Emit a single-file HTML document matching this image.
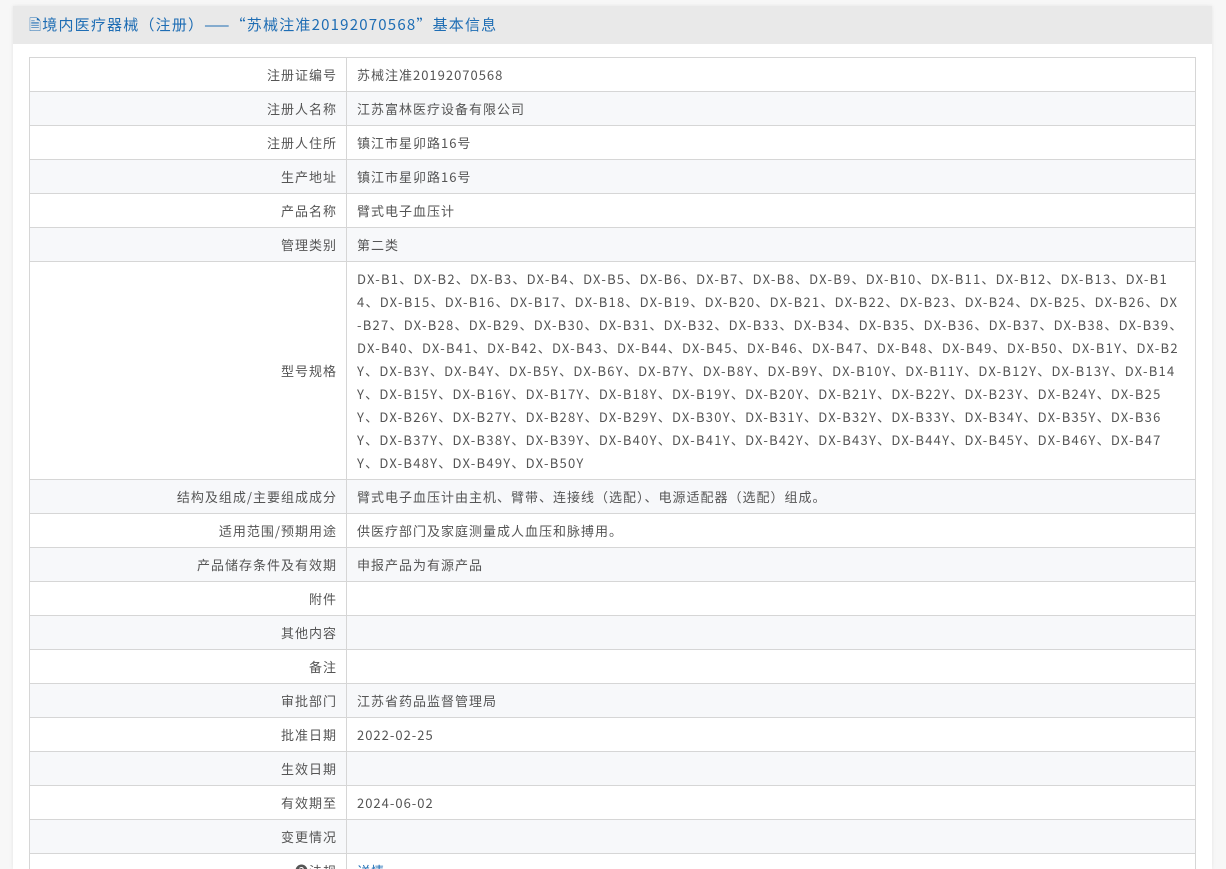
<!DOCTYPE html>
<html><head><meta charset="utf-8"><style>
html,body{margin:0;padding:0;background:#f7f7f7;width:1226px;height:869px;overflow:hidden;font-family:"Noto Sans CJK SC","Liberation Sans",sans-serif;}
.panel{position:absolute;left:13px;top:6px;width:1199px;height:863px;overflow:hidden;background:#fff;box-shadow:0 0 4px rgba(0,0,0,.08);}
.hd{height:38px;background:#e9e9e9;color:#1e6db4;font-size:15px;line-height:38px;padding-left:16px;letter-spacing:1.2px;}
table{position:absolute;left:16px;top:51px;width:1167px;border-collapse:collapse;font-size:13px;color:#555;letter-spacing:1px;}
td{border:1px solid #d6d6d6;height:33px;padding:0;vertical-align:middle;white-space:nowrap;}
td.l{width:307px;text-align:right;padding-right:9px;}
td.v{padding-left:10px;}
tr:nth-child(even) td{background:#f7f8fa;}
.spec{line-height:23px;padding-top:5px;padding-bottom:5px;letter-spacing:1.25px;}
a{color:#1e6db4;text-decoration:none;}
</style></head><body>
<div class="panel">
<div class="hd">🗎境内医疗器械（注册）——“苏械注准20192070568”基本信息</div>
<table>
<tr><td class="l">注册证编号</td><td class="v">苏械注准20192070568</td></tr>
<tr><td class="l">注册人名称</td><td class="v">江苏富林医疗设备有限公司</td></tr>
<tr><td class="l">注册人住所</td><td class="v">镇江市星卯路16号</td></tr>
<tr><td class="l">生产地址</td><td class="v">镇江市星卯路16号</td></tr>
<tr><td class="l">产品名称</td><td class="v">臂式电子血压计</td></tr>
<tr><td class="l">管理类别</td><td class="v">第二类</td></tr>
<tr><td class="l" style="height:207px">型号规格</td><td class="v spec">DX-B1、DX-B2、DX-B3、DX-B4、DX-B5、DX-B6、DX-B7、DX-B8、DX-B9、DX-B10、DX-B11、DX-B12、DX-B13、DX-B1<br>4、DX-B15、DX-B16、DX-B17、DX-B18、DX-B19、DX-B20、DX-B21、DX-B22、DX-B23、DX-B24、DX-B25、DX-B26、DX<br>-B27、DX-B28、DX-B29、DX-B30、DX-B31、DX-B32、DX-B33、DX-B34、DX-B35、DX-B36、DX-B37、DX-B38、DX-B39、<br>DX-B40、DX-B41、DX-B42、DX-B43、DX-B44、DX-B45、DX-B46、DX-B47、DX-B48、DX-B49、DX-B50、DX-B1Y、DX-B2<br>Y、DX-B3Y、DX-B4Y、DX-B5Y、DX-B6Y、DX-B7Y、DX-B8Y、DX-B9Y、DX-B10Y、DX-B11Y、DX-B12Y、DX-B13Y、DX-B14<br>Y、DX-B15Y、DX-B16Y、DX-B17Y、DX-B18Y、DX-B19Y、DX-B20Y、DX-B21Y、DX-B22Y、DX-B23Y、DX-B24Y、DX-B25<br>Y、DX-B26Y、DX-B27Y、DX-B28Y、DX-B29Y、DX-B30Y、DX-B31Y、DX-B32Y、DX-B33Y、DX-B34Y、DX-B35Y、DX-B36<br>Y、DX-B37Y、DX-B38Y、DX-B39Y、DX-B40Y、DX-B41Y、DX-B42Y、DX-B43Y、DX-B44Y、DX-B45Y、DX-B46Y、DX-B47<br>Y、DX-B48Y、DX-B49Y、DX-B50Y</td></tr>
<tr><td class="l">结构及组成/主要组成成分</td><td class="v">臂式电子血压计由主机、臂带、连接线（选配）、电源适配器（选配）组成。</td></tr>
<tr><td class="l">适用范围/预期用途</td><td class="v">供医疗部门及家庭测量成人血压和脉搏用。</td></tr>
<tr><td class="l">产品储存条件及有效期</td><td class="v">申报产品为有源产品</td></tr>
<tr><td class="l">附件</td><td class="v"></td></tr>
<tr><td class="l">其他内容</td><td class="v"></td></tr>
<tr><td class="l">备注</td><td class="v"></td></tr>
<tr><td class="l">审批部门</td><td class="v">江苏省药品监督管理局</td></tr>
<tr><td class="l">批准日期</td><td class="v">2022-02-25</td></tr>
<tr><td class="l">生效日期</td><td class="v"></td></tr>
<tr><td class="l">有效期至</td><td class="v">2024-06-02</td></tr>
<tr><td class="l">变更情况</td><td class="v"></td></tr>
<tr><td class="l">❷法规</td><td class="v"><a>详情</a></td></tr>
</table>
</div>
</body></html>
